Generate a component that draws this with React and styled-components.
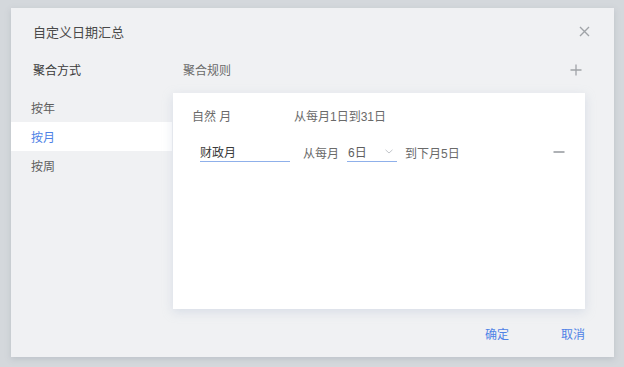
import React from "react";
import styled, { createGlobalStyle } from "styled-components";

const Global = createGlobalStyle`
  html, body {
    margin: 0;
    padding: 0;
    background: #d4d8dc;
    font-family: "Liberation Sans", "Noto Sans CJK SC", sans-serif;
    font-size: 12px;
  }
  * { box-sizing: border-box; }
`;

const Page = styled.div`
  width: 624px;
  height: 367px;
  padding: 8px 0 0 11px;
  overflow: hidden;
`;

const Dialog = styled.div`
  width: 603px;
  height: 349px;
  background: #f0f1f3;
  box-shadow: 0 2px 6px rgba(120, 130, 145, 0.25);
  display: flex;
  flex-direction: column;
`;

const Header = styled.div`
  height: 46px;
  display: flex;
  align-items: center;
  justify-content: space-between;
  padding: 0 22px 0 22px;
`;

const Title = styled.div`
  font-size: 13px;
  color: #4a4a4a;
`;

const IconButton = styled.button`
  border: none;
  background: none;
  padding: 0;
  width: 16px;
  height: 16px;
  display: flex;
  align-items: center;
  justify-content: center;
  cursor: pointer;
`;

const Body = styled.div`
  display: grid;
  grid-template-columns: 161px 1fr;
  flex: 1;
`;

const Column = styled.div`
  display: flex;
  flex-direction: column;
`;

const HeadingRow = styled.div`
  height: 31px;
  display: flex;
  align-items: center;
  justify-content: space-between;
  padding: ${(p) => (p.$right ? "0 30px 0 11px" : "0 0 0 22px")};
  margin-bottom: 8px;
`;

const Heading = styled.div`
  color: ${(p) => (p.$muted ? "#6a6a6a" : "#3a3a3a")};
  font-size: 12px;
`;

const ModeItem = styled.div`
  height: 29px;
  display: flex;
  align-items: center;
  padding-left: 20px;
  color: ${(p) => (p.$active ? "#4f82e6" : "#5e5e5e")};
  background: ${(p) => (p.$active ? "#fff" : "transparent")};
`;

const Panel = styled.div`
  margin-left: 1px;
  width: 412px;
  height: 216px;
  background: #fff;
  box-shadow: 0 3px 10px rgba(170, 182, 205, 0.35);
  padding: 12px 20px 0 19px;
  display: flex;
  flex-direction: column;
  gap: 17px;
`;

const RuleRow = styled.div`
  height: 20px;
  display: flex;
  align-items: center;
  color: #6a6a6a;
`;

const RuleName = styled.div`
  width: 102px;
`;

const NameInput = styled.div`
  margin-left: 8px;
  width: 90px;
  height: 20px;
  border-bottom: 1px solid #8fb0ea;
  display: flex;
  align-items: center;
  color: #3a3a3a;
  padding-bottom: 1px;
`;

const Text = styled.span`
  margin-left: ${(p) => p.$ml || 0}px;
  color: #6a6a6a;
`;

const Select = styled.div`
  margin-left: 8px;
  width: 50px;
  height: 20px;
  border-bottom: 1px solid #8fb0ea;
  display: flex;
  align-items: center;
  justify-content: space-between;
  padding: 0 4px 1px 1px;
  color: #5e5e5e;
`;

const Spacer = styled.div`
  flex: 1;
`;

const Footer = styled.div`
  height: 47px;
  display: flex;
  align-items: center;
  justify-content: flex-end;
  gap: 52px;
  padding: 0 29px 0 0;
`;

const LinkButton = styled.button`
  border: none;
  background: none;
  padding: 0;
  font-family: inherit;
  font-size: 12px;
  color: #4f82e6;
  cursor: pointer;
`;

const CloseIcon = () => (
  <svg width="11" height="11" viewBox="0 0 11 11">
    <path d="M1 1L10 10M10 1L1 10" stroke="#a0a4a8" strokeWidth="1.4" />
  </svg>
);

const PlusIcon = () => (
  <svg width="12" height="12" viewBox="0 0 12 12">
    <path d="M6 0.5V11.5M0.5 6H11.5" stroke="#a0a4a8" strokeWidth="1.3" />
  </svg>
);

const MinusIcon = () => (
  <svg width="12" height="4" viewBox="0 0 12 4">
    <path d="M0.5 2H11.5" stroke="#9a9ea3" strokeWidth="1.6" />
  </svg>
);

const Chevron = () => (
  <svg width="8" height="5" viewBox="0 0 8 5">
    <path d="M0.5 0.8L4 4L7.5 0.8" fill="none" stroke="#c2c5ca" strokeWidth="1" />
  </svg>
);

export default function App() {
  const modes = ["按年", "按月", "按周"];

  return (
    <Page>
      <Global />
      <Dialog>
        <Header>
          <Title>自定义日期汇总</Title>
          <IconButton>
            <CloseIcon />
          </IconButton>
        </Header>
        <Body>
          <Column>
            <HeadingRow>
              <Heading>聚合方式</Heading>
            </HeadingRow>
            {modes.map((m) => (
              <ModeItem key={m} $active={m === "按月"}>
                {m}
              </ModeItem>
            ))}
          </Column>
          <Column>
            <HeadingRow $right>
              <Heading $muted>聚合规则</Heading>
              <IconButton>
                <PlusIcon />
              </IconButton>
            </HeadingRow>
            <Panel>
              <RuleRow>
                <RuleName>自然 月</RuleName>
                <Text>从每月1日到31日</Text>
              </RuleRow>
              <RuleRow>
                <NameInput>财政月</NameInput>
                <Text $ml={13}>从每月</Text>
                <Select>
                  <span>6日</span>
                  <Chevron />
                </Select>
                <Text $ml={8}>到下月5日</Text>
                <Spacer />
                <MinusIcon />
              </RuleRow>
            </Panel>
          </Column>
        </Body>
        <Footer>
          <LinkButton>确定</LinkButton>
          <LinkButton>取消</LinkButton>
        </Footer>
      </Dialog>
    </Page>
  );
}
